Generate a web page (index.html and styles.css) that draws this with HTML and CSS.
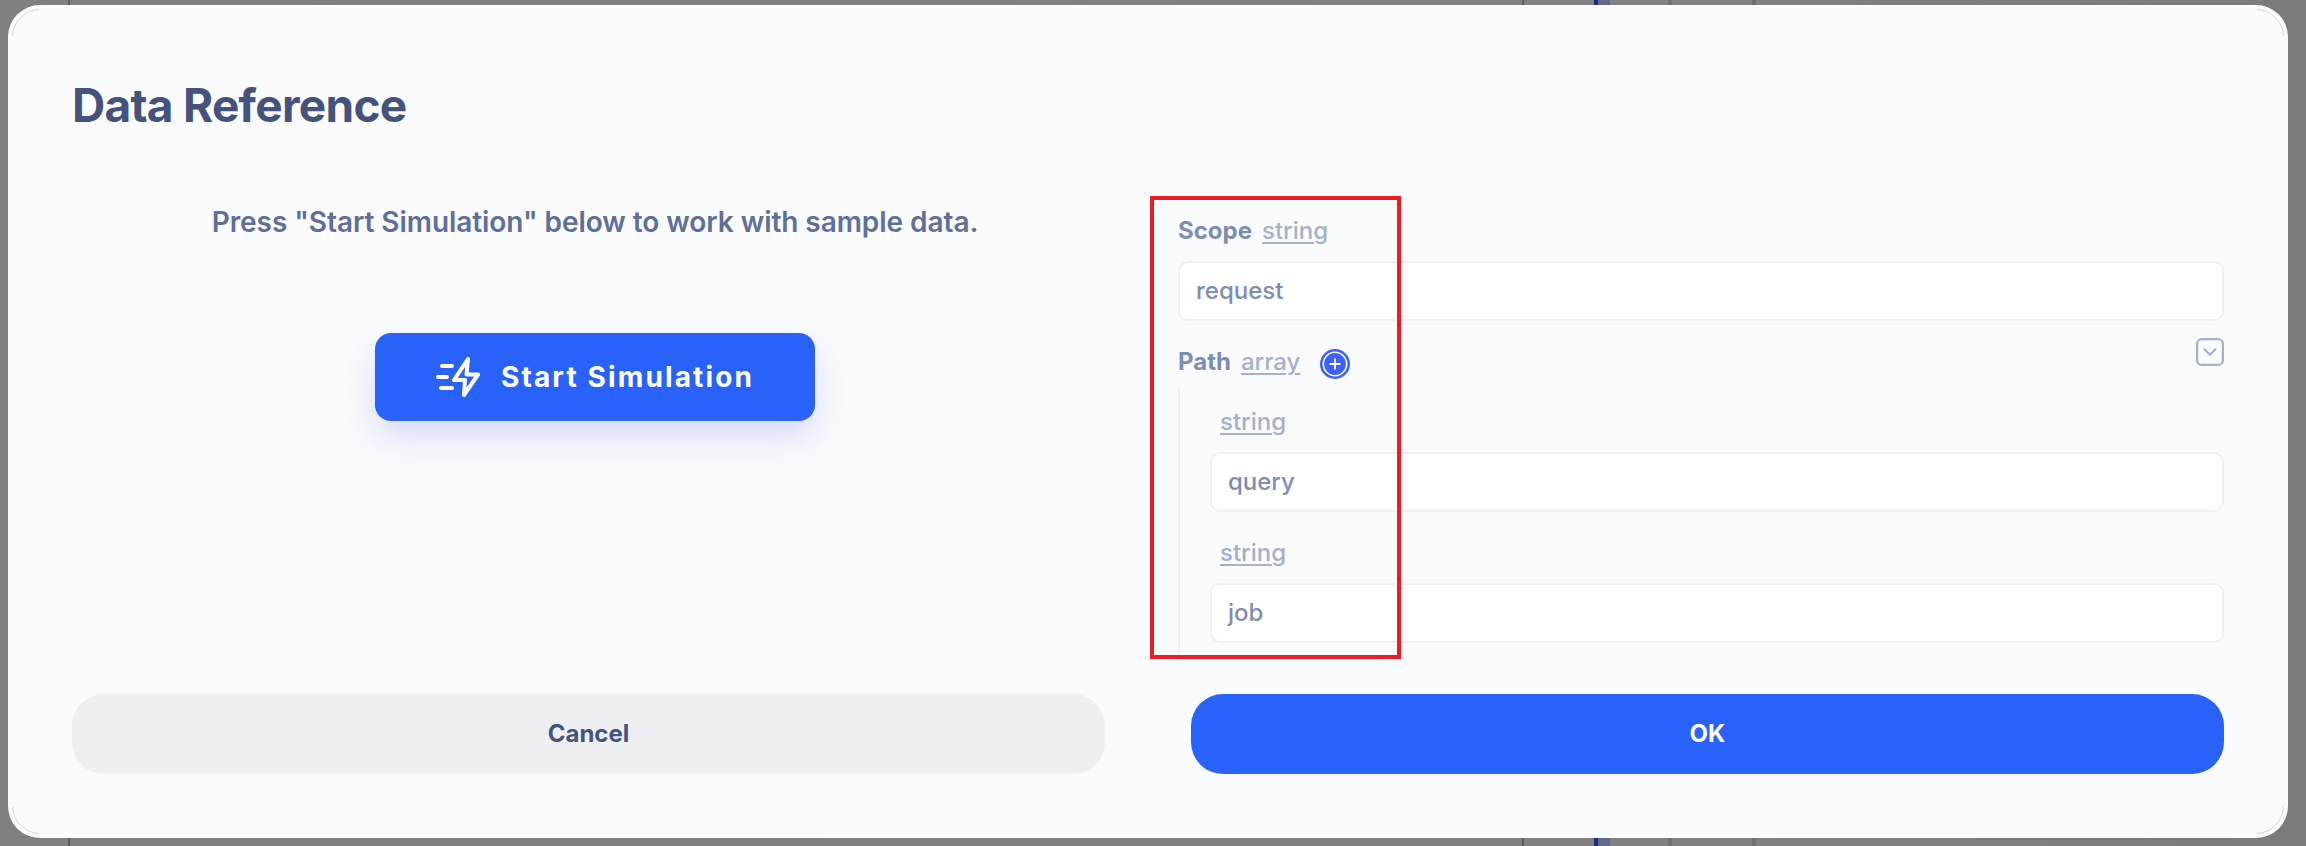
FILE: index.html
```html
<!DOCTYPE html>
<html lang="en">
<head>
<meta charset="utf-8">
<title>Data Reference</title>
<link rel="stylesheet" href="styles.css">
</head>
<body>
<div class="page">
  <i class="rule rule-nav"></i>
  <i class="rule rule-panel"></i>
  <i class="rule rule-active"></i>
  <i class="rule rule-col-a"></i>
  <i class="rule rule-col-b"></i>
  <main class="dialog">
    <h1 class="title">Data Reference</h1>
    <div class="content">
      <section class="simulation">
        <p class="hint">Press "Start Simulation" below to work with sample data.</p>
        <button class="start">
          <svg class="start-icon" width="44" height="42" viewBox="0 0 44 42" fill="none" stroke="#fff" stroke-width="4" stroke-linecap="round" stroke-linejoin="round">
            <path d="M6 10H16M2 21H11M5 32H16M32 3L18 24H29L28 39L42 18.500H30.500Z"/>
          </svg>
          <span class="start-label">Start Simulation</span>
        </button>
      </section>
      <section class="fields">
        <div class="label"><b>Scope</b><span class="type">string</span></div>
        <div class="input">request</div>
        <div class="label label-path"><b>Path</b><span class="type">array</span>
          <svg class="add" width="30" height="30" viewBox="0 0 30 30" fill="none">
            <circle cx="15" cy="15" r="15" fill="#3d5ffb"/>
            <circle cx="15" cy="15" r="11.700" stroke="#fff" stroke-width="1.600"/>
            <path d="M9.500 15H20.500M15 9.500V20.500" stroke="#fff" stroke-width="1.800"/>
          </svg>
          <svg class="collapse" width="28" height="28" viewBox="0 0 28 28" fill="none" stroke="#a3b1cf" stroke-width="2.200" stroke-linecap="round" stroke-linejoin="round">
            <rect x="1.100" y="1.100" width="25.800" height="25.800" rx="4.500"/>
            <path d="M8.500 11.300L14 16.800L19.500 11.300"/>
          </svg>
        </div>
        <div class="items">
          <div class="label item-label"><span class="type">string</span></div>
          <div class="input">query</div>
          <div class="label item-label"><span class="type">string</span></div>
          <div class="input">job</div>
        </div>
      </section>
    </div>
    <div class="actions">
      <button class="action cancel">Cancel</button>
      <button class="action ok">OK</button>
    </div>
  </main>
  <div class="highlight"></div>
</div>
</body>
</html>
```
FILE: styles.css
```css
* { box-sizing: border-box; }
body { margin: 0; font-family: Inter, "Liberation Sans", sans-serif; }
button { border: 0; font-family: inherit; padding: 0; }
.page { position: relative; width: 2306px; height: 846px; padding: 5px 18px 8px 8px; overflow: hidden; background: linear-gradient(90deg, #808080 0, #808182 75%, #7a7b7b 100%); }
.rule { position: absolute; top: 0; bottom: 0; width: 2px; background: #555a70; }
.rule-nav { left: 68px; }
.rule-panel { left: 1522px; }
.rule-active { left: 1594px; width: 16px; background: #646987; border-left: 4px solid #16307f; }
.rule-col-a { left: 1668px; width: 4px; background: #717171; }
.rule-col-b { left: 1752px; width: 4px; background: #717171; }
.dialog { position: relative; display: flex; flex-direction: column; height: 833px; padding: 70px 64px 64px; border-radius: 32px; background: #fafbfd; }
.dialog::before { content: ""; position: absolute; inset: 4px; border-radius: 28px; border: 1px solid #d2d4d7; clip-path: path("M0 0H27V27H0ZM2245 0H2272V27H2245ZM0 798H27V825H0ZM2245 798H2272V825H2245Z"); }
.title { margin: 0; height: 60px; font-size: 46px; line-height: 60px; font-weight: 700; letter-spacing: -0.72px; color: #44537c; }
.content { display: flex; justify-content: space-between; margin-top: 61px; height: 458px; }
.simulation { display: flex; flex-direction: column; align-items: center; width: 1046px; padding-top: 6px; }
.hint { margin: 0; font-size: 28px; line-height: 40px; font-weight: 600; letter-spacing: -0.06px; color: #5f6f99; }
.start { display: flex; align-items: center; justify-content: center; gap: 21px; width: 440px; height: 88px; margin-top: 91px; border-radius: 16px; background: #2962f8; color: #fff; box-shadow: 0 16px 32px rgba(61, 80, 223, .18); }
.start-label { font-size: 28px; font-weight: 700; letter-spacing: 2.13px; }
.fields { width: 1046px; padding-top: 20px; color: #7d8db3; font-size: 24px; }
.label { display: flex; align-items: center; gap: 10px; height: 29px; line-height: 29px; margin-bottom: 16px; }
.label b { font-weight: 700; }
.type { color: #a3b1cf; font-weight: 500; text-decoration: underline; text-decoration-thickness: 2px; text-underline-offset: 3px; }
.label-path { margin: 26px 0 10px; }
.add { margin: 4px 0 0 10px; }
.collapse { margin: -20px 0 0 auto; }
.input { display: flex; align-items: center; height: 60px; padding: 0 16px 2px; border: 2px solid #f0f1f5; border-radius: 10px; background: #fff; font-weight: 500; }
.items { height: 268px; padding: 21px 0 0 30px; border-left: 2px solid #f0f1f5; margin-top: 10px; }
.item-label { padding-left: 10px; }
.items .input + .label { margin-top: 26px; }
.actions { display: grid; grid-template-columns: 1fr 1fr; gap: 86px; margin-top: 40px; }
.action { height: 80px; padding-bottom: 2px; border-radius: 32px; font-size: 24px; font-weight: 700; }
.cancel { background: #eeeff3; color: #44537c; }
.ok { background: #2962f8; color: #fff; }
.highlight { position: absolute; left: 1150px; top: 196px; width: 251px; height: 463px; border: 4px solid #ed1c24; }
```
